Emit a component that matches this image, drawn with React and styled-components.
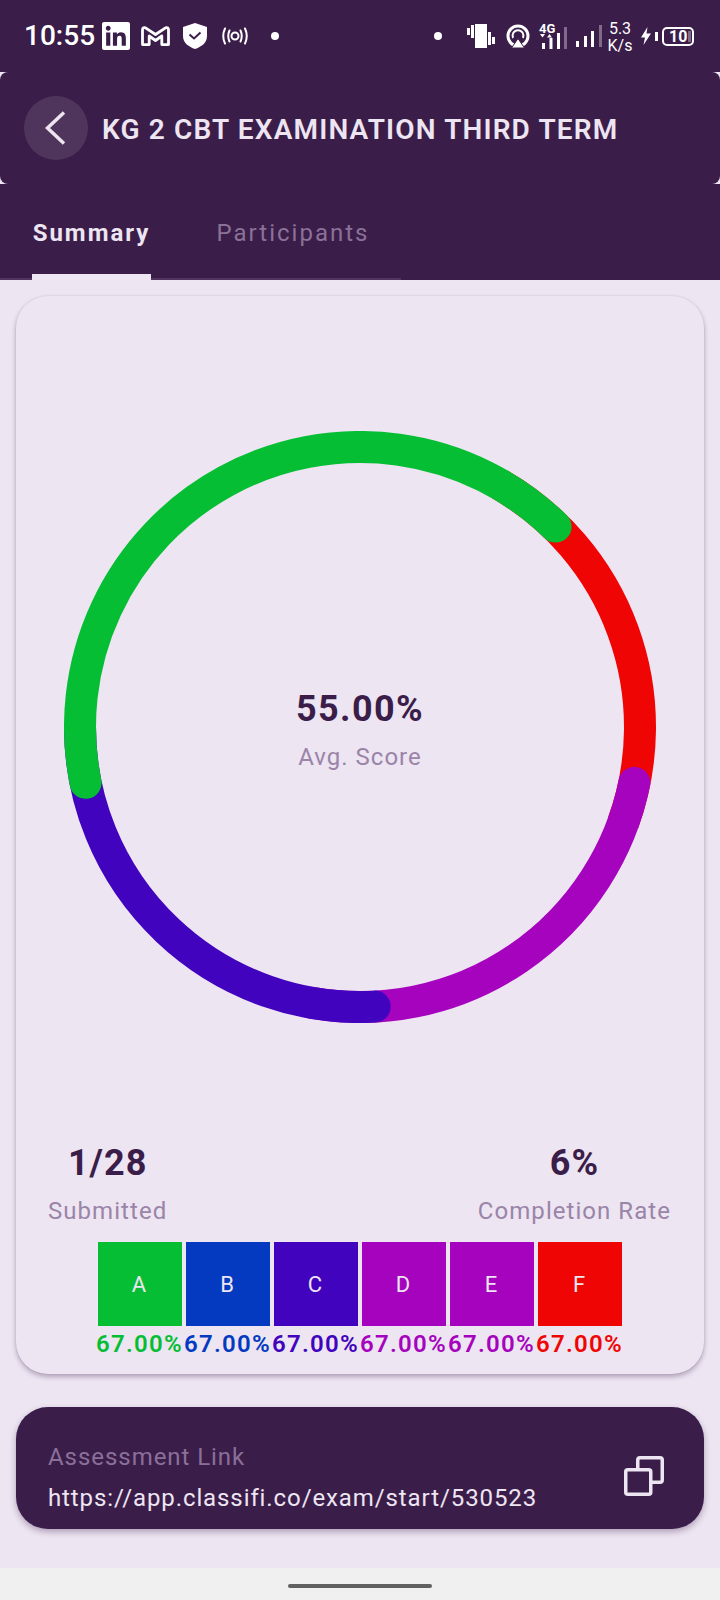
import React from "react";
import styled, { createGlobalStyle } from "styled-components";
import { SiLinkedin } from "react-icons/si";

const DARK = "#3B1D4A";
const LIGHT = "#EDE5F2";

const Global = createGlobalStyle`
  html, body { margin: 0; padding: 0; background: ${LIGHT}; }
  * { box-sizing: border-box; }
  body { font-family: Roboto, "Liberation Sans", sans-serif; }
`;

const Page = styled.div`
  width: 720px;
  height: 1600px;
  display: flex;
  flex-direction: column;
  background: ${LIGHT};
  overflow: hidden;
`;

const StatusBar = styled.div`
  height: 72px;
  flex: none;
  background: ${DARK};
  color: #fff;
  display: flex;
  align-items: center;
  justify-content: space-between;
  padding: 0 26px 0 25px;
`;
const StatusGroup = styled.div`
  display: flex;
  align-items: center;
`;
const Time = styled.span`
  font-size: 28px;
  line-height: 32px;
  font-weight: 500;
  margin-left: -1px;
  margin-right: 7px;
`;
const Slot = styled.span`
  display: flex;
  align-items: center;
  margin-left: ${(p) => p.$gap || 0}px;
  color: #fff;
`;
const SignalIcon = styled.svg`
  overflow: visible;
`;
const Speed = styled.span`
  display: flex;
  flex-direction: column;
  align-items: center;
  width: 26px;
  margin-left: 5px;
  font-size: 16px;
  line-height: 17px;
  margin-top: 2px;
`;
const Battery = styled.span`
  width: 32px;
  height: 19px;
  margin-left: 4px;
  border: 2px solid #fff;
  border-radius: 5px;
  display: flex;
  align-items: center;
  justify-content: space-between;
  padding: 0 1px 0 5px;
  font-size: 16px;
  font-weight: 700;
  line-height: 15px;
`;
const BatteryRest = styled.i`
  width: 3px;
  height: 11px;
  background: rgba(255, 255, 255, 0.35);
`;

const AppBarBack = styled.div`
  height: 112px;
  flex: none;
  background: ${LIGHT};
`;
const AppBar = styled.div`
  height: 100%;
  background: ${DARK};
  border-radius: 8px;
  display: flex;
  align-items: center;
  padding: 0 24px;
  gap: 14px;
`;
const BackButton = styled.button`
  width: 64px;
  height: 64px;
  flex: none;
  padding: 0;
  border: none;
  border-radius: 50%;
  background: rgba(255, 255, 255, 0.1);
  display: flex;
  align-items: center;
  justify-content: center;
`;
const Title = styled.h1`
  margin: 4px 0 0;
  color: ${LIGHT};
  font-size: 28px;
  line-height: 32px;
  font-weight: 600;
  letter-spacing: 1.15px;
  white-space: nowrap;
`;

const Tabs = styled.div`
  height: 96px;
  flex: none;
  background: ${DARK};
  position: relative;
  display: flex;
`;
const TabLine = styled.div`
  position: absolute;
  left: 0;
  bottom: 0;
  width: 401px;
  height: 2px;
  background: #4f3560;
`;
const Tab = styled.div`
  position: relative;
  width: ${(p) => p.$width}px;
  margin-left: ${(p) => p.$left}px;
  display: flex;
  justify-content: center;
  padding-top: 33px;
  font-size: 24px;
  line-height: 32px;
  letter-spacing: 2px;
  font-weight: ${(p) => (p.$active ? 700 : 400)};
  color: ${(p) => (p.$active ? LIGHT : "#8A7297")};
  ${(p) =>
    p.$active &&
    `&::after{content:"";position:absolute;left:0;right:0;bottom:0;height:6px;background:${LIGHT};z-index:1;}`}
`;

const Content = styled.main`
  flex: 1;
  display: flex;
  flex-direction: column;
  padding: 16px 16px 0;
`;
const Card = styled.section`
  height: 1078px;
  flex: none;
  border-radius: 32px;
  background: ${LIGHT};
  box-shadow: 0 3px 5px rgba(59, 29, 74, 0.32), 0 0 2px rgba(59, 29, 74, 0.12);
  padding: 135px 32px 0;
  display: flex;
  flex-direction: column;
`;
const RingWrap = styled.div`
  position: relative;
  width: 592px;
  height: 592px;
  margin: 0 auto;
  flex: none;
`;
const RingCenter = styled.div`
  position: absolute;
  inset: 0;
  display: flex;
  flex-direction: column;
  align-items: center;
  justify-content: center;
`;
const RingValue = styled.div`
  color: ${DARK};
  font-size: 36px;
  line-height: 42px;
  font-weight: 700;
  letter-spacing: 1.4px;
  margin-top: 5px;
`;
const RingLabel = styled.div`
  color: #9a84a8;
  font-size: 24px;
  line-height: 28px;
  letter-spacing: 1px;
  margin-top: 13px;
`;
const Stats = styled.div`
  display: flex;
  justify-content: space-between;
  margin-top: 119px;
  padding-right: 1px;
`;
const Stat = styled.div`
  display: flex;
  flex-direction: column;
  align-items: center;
  gap: 13px;
`;
const StatValue = styled.div`
  color: ${DARK};
  font-size: 36px;
  line-height: 42px;
  font-weight: 700;
  letter-spacing: 1px;
`;
const StatLabel = styled.div`
  color: #9a84a8;
  font-size: 24px;
  line-height: 28px;
  letter-spacing: 1.05px;
`;
const Grades = styled.div`
  display: flex;
  justify-content: center;
  gap: 4px;
  margin-top: 17px;
`;
const Grade = styled.div`
  width: 84px;
  display: flex;
  flex-direction: column;
  align-items: center;
`;
const GradeTile = styled.div`
  width: 84px;
  height: 84px;
  background: ${(p) => p.$color};
  color: ${LIGHT};
  font-size: 22px;
  padding-right: 2px;
  display: flex;
  align-items: center;
  justify-content: center;
`;
const GradePct = styled.div`
  margin-top: 4px;
  padding-right: 1px;
  color: ${(p) => p.$color};
  font-size: 24px;
  line-height: 28px;
  font-weight: 600;
  letter-spacing: 1.3px;
  white-space: nowrap;
`;
const LinkCard = styled.section`
  margin-top: 33px;
  height: 122px;
  flex: none;
  border-radius: 32px;
  background: ${DARK};
  box-shadow: 0 3px 6px rgba(59, 29, 74, 0.35);
  display: flex;
  align-items: flex-start;
  justify-content: space-between;
  padding: 36px 40px 0 32px;
`;
const LinkText = styled.div`
  display: flex;
  flex-direction: column;
  gap: 13px;
`;
const LinkLabel = styled.div`
  color: #8a7099;
  font-size: 24px;
  line-height: 28px;
  letter-spacing: 0.95px;
`;
const LinkUrl = styled.div`
  color: ${LIGHT};
  font-size: 24px;
  line-height: 28px;
  letter-spacing: 0.9px;
`;
const CopyIcon = styled.svg`
  margin-top: 13px;
  flex: none;
`;
const NavBar = styled.div`
  height: 32px;
  flex: none;
  background: #f0f0f0;
  display: flex;
  justify-content: center;
  padding-top: 16px;
`;
const NavPill = styled.div`
  width: 144px;
  height: 4px;
  border-radius: 2px;
  background: #606060;
`;

const C = 296;
const R = 280;
const pt = (deg) => {
  const a = (deg * Math.PI) / 180;
  return `${(C + R * Math.sin(a)).toFixed(2)} ${(C - R * Math.cos(a)).toFixed(2)}`;
};
const arc = (from, to) =>
  `M ${pt(from)} A ${R} ${R} 0 ${to - from > 180 ? 1 : 0} 1 ${pt(to)}`;

const segments = [
  { color: "#F00505", from: 30, to: 110, cap: "butt" },
  { color: "#A503BD", from: 101.5, to: 190, cap: "round" },
  { color: "#4103BD", from: 177, to: 270, cap: "round" },
  { color: "#06BE34", from: -101.5, to: 44.3, cap: "round" },
];

const Ring = () => (
  <svg width="592" height="592" viewBox="0 0 592 592">
    {segments.map((s, i) => (
      <path key={i} d={arc(s.from, s.to)} fill="none" stroke={s.color} strokeWidth="32" strokeLinecap={s.cap} />
    ))}
  </svg>
);

const grades = [
  ["A", "#06BE34"],
  ["B", "#033ABF"],
  ["C", "#4103BD"],
  ["D", "#A503BD"],
  ["E", "#A503BD"],
  ["F", "#F00505"],
];

export default function App() {
  return (
    <Page>
      <Global />
      <StatusBar>
        <StatusGroup>
          <Time>10:55</Time>
          <Slot><SiLinkedin size={28} /></Slot>
          <Slot $gap={11}>
            <svg width="29" height="20" viewBox="0 0 29 20" fill="none" stroke="currentColor" strokeWidth="2.8" strokeLinejoin="round">
              <path d="M1.500 4Q1.500 .8 4.500 1.800L14.500 8.500 24.500 1.800Q27.500 .8 27.500 4V18.600H20.800V10L14.500 14.500 8.200 10V18.600H1.500Z" />
            </svg>
          </Slot>
          <Slot $gap={13}>
            <svg width="24" height="26" viewBox="0 0 24 26">
              <path fill="currentColor" d="M12 0 24 4V13C24 20 18 24 12 26 6 24 0 20 0 13V4Z" />
              <path fill="none" stroke={DARK} strokeWidth="2" d="M6.500 11.500 11 15.500 17.500 9.500" />
            </svg>
          </Slot>
          <Slot $gap={15}>
            <svg width="26" height="18" viewBox="0 0 26 18" fill="none" stroke="currentColor" strokeWidth="2" strokeLinecap="round">
              <circle cx="13" cy="9" r="3.500" />
              <path d="M7.500 3.500Q5 9 7.500 14.500M18.500 3.500Q21 9 18.500 14.500M3 1.500Q-.5 9 3 16.500M23 1.500Q26.500 9 23 16.500" />
            </svg>
          </Slot>
          <Slot $gap={23}>
            <svg width="8" height="8" viewBox="0 0 8 8"><circle cx="4" cy="4" r="4" fill="currentColor" /></svg>
          </Slot>
        </StatusGroup>
        <StatusGroup>
          <Slot>
            <svg width="8" height="8" viewBox="0 0 8 8"><circle cx="4" cy="4" r="4" fill="currentColor" /></svg>
          </Slot>
          <Slot $gap={25}>
            <svg width="28" height="24" viewBox="0 0 28 24" fill="currentColor">
              <rect x="8" y="0" width="12" height="24" />
              <rect x="0" y="4" width="3" height="7" />
              <rect x="4" y="1" width="3" height="13" />
              <rect x="21" y="8" width="3" height="13" />
              <rect x="25" y="13" width="3" height="7" />
            </svg>
          </Slot>
          <Slot $gap={11}>
            <svg width="24" height="24" viewBox="0 0 24 24">
              <circle cx="12" cy="12" r="10" fill="none" stroke="currentColor" strokeWidth="3" />
              <path d="M7 14A5.500 5.500 0 1 1 17 14" fill="none" stroke="currentColor" strokeWidth="2" />
              <path d="M12 14.500 18.500 24H5.500Z" fill="currentColor" stroke={DARK} strokeWidth="1" />
            </svg>
          </Slot>
          <Slot $gap={9}>
            <SignalIcon width="28" height="28" viewBox="0 0 28 28" fill="currentColor">
              <text x="0" y="11" fontFamily="Roboto, sans-serif" fontSize="13" fontWeight="700">4G</text>
              <path d="M1 12h5l-2.500 3.500ZM8 15.500h5l-2.500-3.500Z" />
              <rect x="3" y="21" width="3" height="6" />
              <rect x="10.500" y="16" width="3" height="11" />
              <rect x="18" y="11" width="3" height="16" />
              <rect x="25" y="5" width="3" height="22" opacity=".35" />
            </SignalIcon>
          </Slot>
          <Slot $gap={9}>
            <svg width="26" height="22" viewBox="0 0 26 22" fill="currentColor">
              <rect x="0" y="16" width="3" height="6" />
              <rect x="8" y="11" width="3" height="11" />
              <rect x="15" y="6" width="3" height="16" />
              <rect x="23" y="0" width="3" height="22" opacity=".35" />
            </svg>
          </Slot>
          <Speed>
            <span>5.3</span>
            <span>K/s</span>
          </Speed>
          <Slot $gap={8}>
            <svg width="10" height="18" viewBox="0 0 10 18" fill="currentColor">
              <path d="M6.500 0 0 10.500H4L2.500 18 10 6.500H5.500Z" />
            </svg>
          </Slot>
          <Slot $gap={4}>
            <svg width="3" height="9" viewBox="0 0 3 9"><rect width="3" height="9" fill="currentColor" /></svg>
          </Slot>
          <Battery>
            <span>10</span>
            <BatteryRest />
          </Battery>
        </StatusGroup>
      </StatusBar>

      <AppBarBack>
        <AppBar>
          <BackButton aria-label="Back">
            <svg width="24" height="36" viewBox="0 0 24 36" fill="none" stroke={LIGHT} strokeWidth="3.500">
              <path d="M20 2.500 3.500 18 20 33.500" />
            </svg>
          </BackButton>
          <Title>KG 2 CBT EXAMINATION THIRD TERM</Title>
        </AppBar>
      </AppBarBack>

      <Tabs>
        <TabLine />
        <Tab $active $left={32} $width={119}>Summary</Tab>
        <Tab $left={50} $width={184}>Participants</Tab>
      </Tabs>

      <Content>
        <Card>
          <RingWrap>
            <Ring />
            <RingCenter>
              <RingValue>55.00%</RingValue>
              <RingLabel>Avg. Score</RingLabel>
            </RingCenter>
          </RingWrap>
          <Stats>
            <Stat>
              <StatValue>1/28</StatValue>
              <StatLabel>Submitted</StatLabel>
            </Stat>
            <Stat>
              <StatValue>6%</StatValue>
              <StatLabel>Completion Rate</StatLabel>
            </Stat>
          </Stats>
          <Grades>
            {grades.map(([g, c]) => (
              <Grade key={g}>
                <GradeTile $color={c}>{g}</GradeTile>
                <GradePct $color={c}>67.00%</GradePct>
              </Grade>
            ))}
          </Grades>
        </Card>
        <LinkCard>
          <LinkText>
            <LinkLabel>Assessment Link</LinkLabel>
            <LinkUrl>https://app.classifi.co/exam/start/530523</LinkUrl>
          </LinkText>
          <CopyIcon width="40" height="40" viewBox="0 0 40 40" fill="none" stroke={LIGHT} strokeWidth="3.500">
            <rect x="1.750" y="13.750" width="25" height="24.500" rx="2" />
            <path d="M13.750 13V4a2.250 2.250 0 0 1 2.250-2.250H36A2.250 2.250 0 0 1 38.250 4V24A2.250 2.250 0 0 1 36 26.250H27" />
          </CopyIcon>
        </LinkCard>
      </Content>
      <NavBar>
        <NavPill />
      </NavBar>
    </Page>
  );
}
